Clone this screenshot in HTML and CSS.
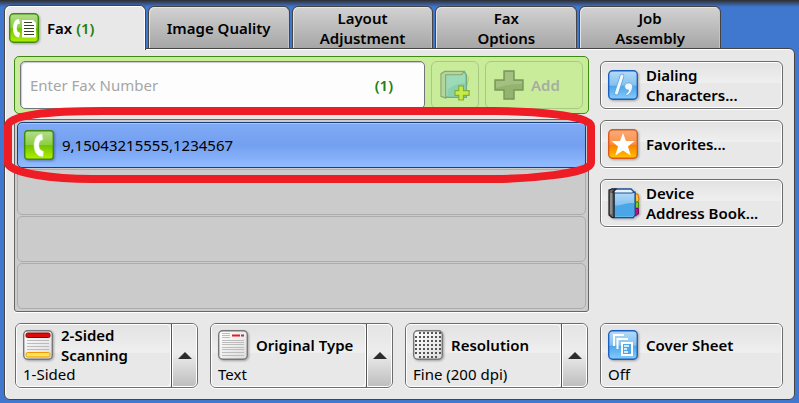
FILE: index.html
```html
<!DOCTYPE html>
<html lang="en">
<head>
    <meta charset="UTF-8">
    <meta name="viewport" content="width=device-width, initial-scale=1.0">
    <title>Fax</title>
    <link rel="stylesheet" href="styles.css">
</head>
<body>

    <!-- Tabs -->
    <nav class="tabs">
        <button class="tab active" type="button">
            <svg class="icon" viewBox="0 0 30 30">
                <defs>
                    <linearGradient id="green" x1="0" y1="0" x2="0" y2="1">
                        <stop offset="0" stop-color="#b4dd92"/>
                        <stop offset="0.5" stop-color="#8ccf3c"/>
                        <stop offset="0.52" stop-color="#72c400"/>
                        <stop offset="1" stop-color="#b4f000"/>
                    </linearGradient>
                    <linearGradient id="blue" x1="0" y1="0" x2="0" y2="1">
                        <stop offset="0" stop-color="#b5dcf7"/>
                        <stop offset="0.5" stop-color="#84c2f0"/>
                        <stop offset="0.55" stop-color="#4da8ea"/>
                        <stop offset="1" stop-color="#86cbfb"/>
                    </linearGradient>
                    <linearGradient id="orange" x1="0" y1="0" x2="0" y2="1">
                        <stop offset="0" stop-color="#fbab7c"/>
                        <stop offset="0.5" stop-color="#f99148"/>
                        <stop offset="0.55" stop-color="#f78300"/>
                        <stop offset="1" stop-color="#ffc400"/>
                    </linearGradient>
                    <linearGradient id="paper" x1="0" y1="0" x2="1" y2="1">
                        <stop offset="0" stop-color="#ffffff"/>
                        <stop offset="1" stop-color="#dcdcdc"/>
                    </linearGradient>
                </defs>
                <rect x="0.7" y="0.7" width="28.6" height="28.6" rx="4" fill="url(#green)" stroke="#3f8a10" stroke-width="1.400"/>
                <path d="M10 6C6 6 4 10 4 15.500s2.500 9 6 9l1-4.500-2.500-1.500c-1-2-1-5 0-7L11 10.500z" fill="#fff"/>
                <path d="M13 7h11l3 3v14.500H13z" fill="#fff"/>
                <path d="M15 9.500H23M15 12.500H25M15 15.500H25M15 18.500H25M15 21.500H25" stroke="#34451f" stroke-width="1.200"/>
            </svg>
            <span>Fax <span class="count">(1)</span></span>
        </button>
        <button class="tab" type="button">Image Quality</button>
        <button class="tab" type="button">Layout<br>Adjustment</button>
        <button class="tab" type="button">Fax<br>Options</button>
        <button class="tab" type="button">Job<br>Assembly</button>
    </nav>

    <main class="panel">
        <div class="recipients">
            <!-- Number entry -->
            <div class="entry">
                <div class="field">
                    <input type="text" placeholder="Enter Fax Number" aria-label="Enter Fax Number">
                    <span class="count">(1)</span>
                </div>
                <button class="ghost book" type="button" aria-label="Address book" disabled>
                    <svg class="icon" viewBox="0 0 32 30">
                        <path d="M25 5c4-1 6 1 5 5l-2 8h-3z" fill="#dfe26b" stroke="#b7c850"/>
                        <path d="M5 1h21l2 3v24H5z" fill="#9ddbb8" stroke="#6fa88a" stroke-width="1.500"/>
                        <path d="M1 3l4-2.500h21L23 4H6v25l-5-2z" fill="#b4d69a" stroke="#87a873" stroke-width="1.200"/>
                        <path d="M8 20c5-5 12-7 19-7v14H8z" fill="#8bd0ad"/>
                        <path d="M20 16h5v5h6v5h-6v5h-5v-5h-4v-5h4z" fill="#c6ec45" stroke="#86ad3c" stroke-width="1.300"/>
                    </svg>
                </button>
                <button class="ghost add" type="button" disabled>
                    <svg class="icon" viewBox="0 0 30 30">
                        <path d="M10 1h10v9h9v10h-9v9H10v-9H1V10h9z" fill="#94b36f" stroke="#78965b" stroke-width="1.400"/>
                        <path d="M11 2h8v9h9v3c-8 0-17 1-26 4v-7h9z" fill="#a3c07e"/>
                    </svg>
                    Add
                </button>
            </div>

            <!-- Recipient list -->
            <div class="list-wrap">
                <ul class="list">
                    <li class="row selected">
                        <svg class="icon" viewBox="0 0 30 30">
                            <rect x="0.7" y="0.7" width="28.6" height="28.6" rx="3" fill="url(#green)" stroke="#3f8a10" stroke-width="1.400"/>
                            <path d="M18 4c-5 0-8 5-8 11.500S13.500 27 19 26.500l.5-5-3.500-2c-1.500-3-1.500-6 0-8.500l3-1.500z" fill="#fff" stroke="#d5e8c4" stroke-width="0.500"/>
                        </svg>
                        9,15043215555,1234567
                    </li>
                    <li class="row"></li>
                    <li class="row"></li>
                    <li class="row"></li>
                </ul>
                <svg class="marker" viewBox="0 0 592 78" preserveAspectRatio="none">
                    <path d="M5 25V20C5 9 45 5 100 5H490C525 5 587 9 587 20V57C587 68 520 73 490 73H90C50 73 5 67 5 57Z"/>
                </svg>
            </div>
        </div>

        <!-- Side buttons -->
        <div class="side">
            <button class="btn" type="button">
                <svg class="icon" viewBox="0 0 30 30">
                    <rect x="0.7" y="0.7" width="28.6" height="28.6" rx="4" fill="url(#blue)" stroke="#1c5fc0" stroke-width="1.400"/>
                    <path d="M8.500 23L14 6" stroke="#5b9fe0" stroke-width="4.500" stroke-linecap="round"/>
                    <path d="M8.500 23L14 6" stroke="#f1f7ff" stroke-width="3" stroke-linecap="round"/>
                    <path d="M20 13c3-.5 5 1.500 4.500 4.500-.5 4-3 7-6 8l-1-1.500c2-1 3-2.500 3-4-5 0-5-6.500-.5-7z" fill="#f1f7ff" stroke="#5b9fe0" stroke-width="0.700"/>
                </svg>
                <span>Dialing<br>Characters...</span>
            </button>
            <button class="btn" type="button">
                <svg class="icon" viewBox="0 0 30 30">
                    <rect x="0.7" y="0.7" width="28.6" height="28.6" rx="4" fill="url(#orange)" stroke="#d95a1c" stroke-width="1.400"/>
                    <path d="M15 4l3 8h8.500l-6.500 5.500 2.700 9-7.700-5-7.700 5L10 17.500 3.500 12H12z" fill="#fff"/>
                </svg>
                Favorites...
            </button>
            <button class="btn" type="button">
                <svg class="icon book-icon" viewBox="0 0 32 30">
                    <path d="M26 6h4l1 6-2 2h-3z" fill="#ffc03a" stroke="#c87b10"/>
                    <path d="M27 14h3.500v6H27z" fill="#7ccf20" stroke="#3f8a10"/>
                    <path d="M27 20.500h3.500V26L27 28z" fill="#b3128c" stroke="#7a0a60"/>
                    <path d="M4 1h19l4 4v22l-2 2.500H5z" fill="#e8f3ff" stroke="#1c4f9c" stroke-width="1.300"/>
                    <path d="M6 5h18l3-1v23l-2 2.500H6z" fill="url(#blue)" stroke="#1a5294" stroke-width="1.200"/>
                    <path d="M7 20c6-4 12-5 19-5v12l-1.500 1.500H7z" fill="#4ba6e8"/>
                    <path d="M1 2l3-1h4L5 4h1v25.500H4L1 27z" fill="#686868" stroke="#1c1c1c" stroke-width="1.200"/>
                    <path d="M3 5v21" stroke="#a5a5a5" stroke-width="1.200"/>
                </svg>
                <span>Device<br>Address Book...</span>
            </button>
        </div>

        <!-- Scan settings -->
        <div class="split">
            <button class="btn setting" type="button">
                <span class="title">
                    <svg class="icon" viewBox="0 0 30 30">
                        <rect x="0.7" y="0.7" width="28.6" height="28.6" rx="4" fill="url(#paper)" stroke="#777" stroke-width="1.400"/>
                        <path d="M4 10.500h22M4 13.500h22M4 16.500h22M4 19.500h22" stroke="#bbb"/>
                        <rect x="3" y="3" width="24" height="4.500" rx="1.500" fill="#dd0b0b" stroke="#8c0000"/>
                        <rect x="3" y="22.500" width="24" height="4.500" rx="1.500" fill="#ffe15a" stroke="#f09a00"/>
                    </svg>
                    <span>2-Sided<br>Scanning</span>
                </span>
                <span class="value">1-Sided</span>
            </button>
            <button class="arrow" type="button" aria-label="2-Sided Scanning options"></button>
        </div>
        <div class="split">
            <button class="btn setting" type="button">
                <span class="title">
                    <svg class="icon" viewBox="0 0 30 30">
                        <rect x="0.7" y="0.7" width="28.6" height="28.6" rx="4" fill="url(#paper)" stroke="#777" stroke-width="1.400"/>
                        <path d="M4 3.500h8M4 5.500h8M4 7.500h8M4 10.500h22M4 12.500h22M4 14.500h22M4 17.500h22M4 19.500h22M4 22.500h22M4 25.500h22" stroke="#bdbdbd"/>
                        <path d="M14 5.500h8M23 5.500h3" stroke="#e51c23" stroke-width="2"/>
                    </svg>
                    <span>Original Type</span>
                </span>
                <span class="value">Text</span>
            </button>
            <button class="arrow" type="button" aria-label="Original Type options"></button>
        </div>
        <div class="split">
            <button class="btn setting" type="button">
                <span class="title">
                    <svg class="icon" viewBox="0 0 30 30">
                        <rect x="0.7" y="0.7" width="28.6" height="28.6" rx="4" fill="url(#paper)" stroke="#777" stroke-width="1.400"/>
                        <path d="M6 3h22M2 7h26M2 11h26M2 15h26M2 19h26M2 23h26M6 27h20" stroke="#555" stroke-width="2" stroke-dasharray="2 2"/>
                    </svg>
                    <span>Resolution</span>
                </span>
                <span class="value">Fine (200 dpi)</span>
            </button>
            <button class="arrow" type="button" aria-label="Resolution options"></button>
        </div>
        <div class="split">
            <button class="btn setting" type="button">
                <span class="title">
                    <svg class="icon" viewBox="0 0 30 30">
                        <rect x="0.7" y="0.7" width="28.6" height="28.6" rx="4" fill="url(#blue)" stroke="#1c5fc0" stroke-width="1.400"/>
                        <path d="M6 16V5h10M9.500 19V9H20" fill="none" stroke="#fff" stroke-width="2"/>
                        <rect x="14" y="13" width="10" height="12" fill="#4da8ea" stroke="#fff" stroke-width="2"/>
                        <path d="M16 16h5M16 19h3M16 22h4" stroke="#fff" stroke-width="1.300"/>
                    </svg>
                    <span>Cover Sheet</span>
                </span>
                <span class="value">Off</span>
            </button>
        </div>
    </main>

</body>
</html>
```
FILE: styles.css
```css
/* General Styles */
* {
    box-sizing: border-box;
}
body {
    margin: 0;
    padding: 5px 4px 3px;
    min-height: 100vh;
    background: #4078d0 linear-gradient(#2d2d2d 0, #34435f 2px, #4078d0 7px) no-repeat;
    font-family: "Noto Sans", "Open Sans", sans-serif;
    font-size: 15px;
    line-height: 20px;
    color: #000;
}
button {
    margin: 0;
    font: inherit;
    font-weight: 600;
    color: inherit;
    cursor: pointer;
}
.icon {
    flex: none;
    width: 30px;
    height: 30px;
    overflow: visible;
    filter: drop-shadow(1px 1px 1px rgba(0, 0, 0, 0.3));
}
.count {
    color: #1f8010;
    font-weight: 600;
}

/* Tabs */
.tabs {
    display: grid;
    grid-template-columns: repeat(5, 1fr);
    align-items: end;
    gap: 2px;
    margin-right: 74px;
}
.tab {
    height: 42px;
    padding: 0;
    border: 1px solid #444;
    border-bottom: 0;
    border-radius: 6px 6px 0 0;
    background: linear-gradient(#d2d2d2, #a6a6a6);
    box-shadow: inset 1px 1px 0 #e4e4e4, inset -1px 0 0 #c4c4c4;
}
.tab.active {
    display: flex;
    align-items: center;
    gap: 8px;
    z-index: 1;
    height: 45px;
    margin-bottom: -2px;
    padding: 0 4px;
    background: #e8e8e8;
    box-shadow: inset 1px 1px 0 #fff, inset -1px 0 0 #fff;
}

/* Main panel */
.panel {
    display: grid;
    grid-template-columns: repeat(4, 1fr);
    gap: 11px 12px;
    padding: 7px 11px 11px 10px;
    border: 1px solid #444;
    border-radius: 0 6px 6px 6px;
    background: #e8e8e8;
    box-shadow: inset 0 1px 0 #fff, inset 1px 0 0 #fff;
}
.recipients {
    grid-column: span 3;
    margin: 0 -1px;
}

/* Number entry */
.entry {
    display: flex;
    gap: 6px;
    padding: 4px 5px;
    border: 1px solid #3f8a10;
    border-radius: 5px;
    background: #c9ec9a;
}
.field {
    flex: 1;
    display: flex;
    align-items: center;
    height: 48px;
    padding: 0 31px 0 9px;
    border: 1px solid #74747c;
    border-radius: 5px;
    background: #fdfdfd;
    box-shadow: inset 1px 1px 1px #c8c8d0;
}
.field input {
    flex: 1;
    min-width: 0;
    padding: 0;
    border: 0;
    outline: 0;
    background: none;
    font: inherit;
}
.field input::placeholder {
    color: #a6a6a6;
    opacity: 1;
}
.ghost {
    display: flex;
    align-items: center;
    height: 48px;
    padding: 0 8px;
    border: 1px solid #a9c882;
    border-radius: 6px;
    background: none;
    color: #a8ada2;
}
.ghost .icon {
    filter: none;
}
.book {
    width: 48px;
}
.add {
    width: 98px;
    gap: 7px;
}

/* Recipient list */
.list-wrap {
    position: relative;
    margin-top: 5px;
}
.list {
    display: grid;
    gap: 1px;
    margin: 0;
    padding: 2px;
    border: 1px solid #666;
    border-radius: 3px;
    background: #cbcbcb;
    box-shadow: 0 1px 0 #fff;
    list-style: none;
}
.row {
    display: flex;
    align-items: center;
    gap: 8px;
    height: 46px;
    padding: 0 6px;
    border: 1px solid #acacac;
    border-radius: 5px;
}
.row.selected {
    border-color: #173f7c;
    background: linear-gradient(#80aaf5, #739ff0 50%, #91bcff);
    box-shadow: inset 0 1px 0 #a5c5fb;
}
.marker {
    position: absolute;
    top: -13px;
    left: -11px;
    width: calc(100% + 18px);
    height: 78px;
    pointer-events: none;
}
.marker path {
    fill: none;
    stroke: #ee1c24;
    stroke-width: 8px;
}

/* Buttons */
.side {
    display: grid;
    align-content: start;
    gap: 11px;
    padding-top: 5px;
}
.btn {
    display: flex;
    align-items: center;
    gap: 8px;
    height: 48px;
    padding: 0 7px;
    border: 1px solid #6c6c6c;
    border-radius: 6px;
    background: linear-gradient(#e2e2e2, #efefef 45%, #e8e8e8 46%);
    box-shadow: inset 0 0 0 1px #fff, 0 1px 0 #fff;
    text-align: left;
    white-space: nowrap;
}
.book-icon {
    width: 32px;
    margin-right: -2px;
}
.split {
    display: flex;
    border: 1px solid #6c6c6c;
    border-radius: 6px;
    background: #e7e7e7;
    box-shadow: 0 1px 0 #fff;
    overflow: hidden;
}
.setting {
    flex: 1;
    min-width: 0;
    flex-direction: column;
    align-items: stretch;
    gap: 0;
    height: 63px;
    padding: 1px 7px;
    border: 0;
    border-radius: 5px;
}
.title {
    display: flex;
    align-items: center;
    gap: 8px;
    height: 40px;
}
.value {
    font-weight: 400;
    line-height: 18px;
}
.arrow {
    display: grid;
    place-items: center;
    width: 26px;
    padding: 0;
    border: 0;
    border-left: 1px solid #555;
    border-radius: 0 5px 5px 0;
    background: linear-gradient(#e4e4e4, #ededed 45%, #bdbdbd);
    box-shadow: inset 0 0 0 1px #fff;
}
.arrow::before {
    content: "";
    border: 7px solid transparent;
    border-top: 0;
    border-bottom: 7px solid #2c2c2c;
}
```
